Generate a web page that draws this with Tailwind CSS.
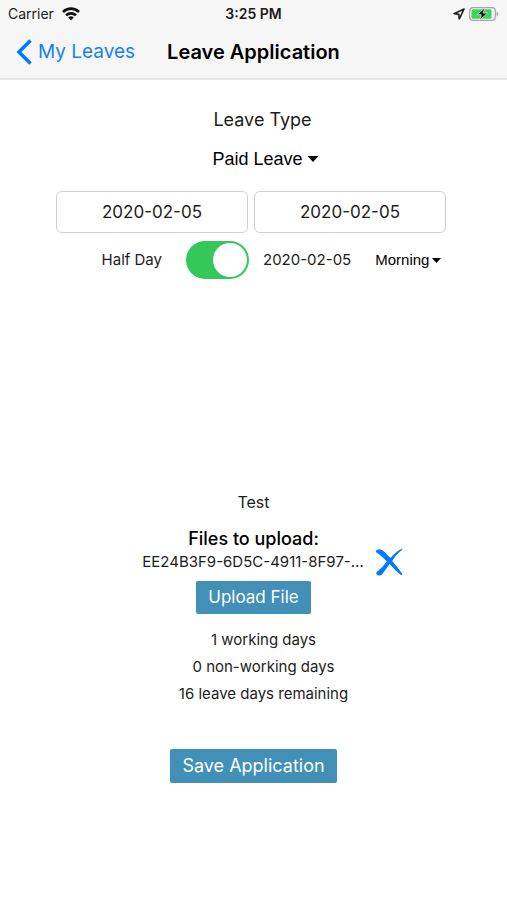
<!DOCTYPE html>
<html lang="en">

<head>
    <meta charset="UTF-8" />
    <meta name="viewport" content="width=device-width, initial-scale=1.0" />
    <title>Leave Application</title>
    <script src="https://cdn.jsdelivr.net/npm/@tailwindcss/browser@4"></script>
</head>

<body class="min-h-screen bg-white text-[#1c1c1c] font-[Inter,sans-serif]">

    <!-- Header -->
    <header class="h-20 bg-[#f6f6f6] border-b-2 border-[#e6e6e6]">
        <!-- Status bar -->
        <div class="grid grid-cols-3 items-center h-7 px-2 text-sm leading-5">
            <div class="flex items-center gap-2">
                <span>Carrier</span>
                <svg class="w-[18px] h-[14px]" viewBox="0 0 18 14" fill="none" stroke="#111" stroke-width="2.7" aria-hidden="true">
                    <path d="M1 5a11.4 11.4 0 0 1 16 0" />
                    <path d="M4 8.400a7.2 7.2 0 0 1 10 0" />
                    <path d="M6.2 10.600a4 4 0 0 1 5.600 0L9 13.500z" fill="#111" stroke="none" />
                </svg>
            </div>
            <span class="text-center font-semibold">3:25 PM</span>
            <div class="flex items-center justify-end gap-1">
                <svg class="w-3 h-3" viewBox="0 0 12 12" fill="none" stroke="#222" stroke-width="1.7" stroke-linejoin="round" aria-hidden="true">
                    <path d="M11 1 1.200 5.700l4.600.6.5 4.700z" />
                </svg>
                <svg class="w-[30px] h-[14px]" viewBox="0 0 30 14" aria-hidden="true">
                    <rect x=".7" y=".7" width="25.6" height="12.6" rx="3.400" fill="#f6f6f6" stroke="#a5a5a5" stroke-width="1.2" />
                    <rect x="2.5" y="2.200" width="20" height="9.600" rx="1.6" fill="#3bd45e" />
                    <path d="M27.6 4.600c2.200.8 2.200 4 0 4.800z" fill="#a5a5a5" />
                    <path d="M15.800.8 8 7.800h4.300l-1.800 5.600 8-7.300h-4.300z" fill="#111" stroke="#e2f7e6" stroke-width=".7" />
                </svg>
            </div>
        </div>
        <!-- Navigation -->
        <nav class="flex items-center h-12 pl-4">
            <a href="#" class="flex items-center gap-[6px] text-[19px] text-[#1581f8]">
                <svg class="w-4 h-[26px]" viewBox="0 0 16 26" fill="none" stroke="#007aff" stroke-width="3.6" aria-hidden="true">
                    <path d="M14.5 1.5 3 13l11.5 11.5" />
                </svg>
                My Leaves
            </a>
            <h1 class="ml-8 text-xl font-semibold text-black">Leave Application</h1>
        </nav>
    </header>

    <!-- Leave form -->
    <form class="flex flex-col items-center pt-[26px]">
        <label for="leave-type" class="pl-[18px] text-lg leading-7">Leave Type</label>
        <div class="relative mt-[11px] pl-6">
            <select id="leave-type" class="block appearance-none field-sizing-content pr-4 text-lg leading-7 font-[Liberation_Sans,sans-serif] text-black">
                <option>Paid Leave</option>
            </select>
            <svg class="absolute right-0 top-[11px] w-3 h-[6px] pointer-events-none" viewBox="0 0 12 6" aria-hidden="true">
                <path d="M.5 0h11L6 6z" fill="#000" />
            </svg>
        </div>

        <!-- Date range -->
        <div class="flex gap-[6px] w-full mt-[18px] pl-14 pr-[61px]">
            <input type="text" value="2020-02-05" aria-label="Start date"
                class="flex-1 min-w-0 h-[42px] rounded-md border border-[#cfcfcf] text-center text-[17px]" />
            <input type="text" value="2020-02-05" aria-label="End date"
                class="flex-1 min-w-0 h-[42px] rounded-md border border-[#cfcfcf] text-center text-[17px]" />
        </div>

        <!-- Half day -->
        <div class="flex items-center h-[38px] mt-2 pl-9 text-[15px]">
            <label for="half-day">Half Day</label>
            <input id="half-day" type="checkbox" role="switch" checked
                class="ml-6 appearance-none w-[63px] h-[38px] p-[2px] rounded-full bg-[#d9d9d9] checked:bg-[#34c759] flex checked:justify-end before:size-[34px] before:rounded-full before:bg-white" />
            <span class="ml-[14px]">2020-02-05</span>
            <div class="relative ml-6">
                <select aria-label="Part of day" class="block appearance-none field-sizing-content pr-3 text-[15px] font-[Liberation_Sans,sans-serif] text-black">
                    <option>Morning</option>
                </select>
                <svg class="absolute right-0 top-[9px] w-[9px] h-[5px] pointer-events-none" viewBox="0 0 9 5" aria-hidden="true">
                    <path d="M0 0h9L4.500 5z" fill="#000" />
                </svg>
            </div>
        </div>

        <p class="mt-[209px] text-base leading-7">Test</p>

        <!-- Files -->
        <h2 class="mt-[11px] text-lg leading-6 font-medium text-black">Files to upload:</h2>
        <div class="flex items-center gap-[11px] pl-[38px] h-[22px]">
            <span class="text-[15px]">EE24B3F9-6D5C-4911-8F97-...</span>
            <button type="button" aria-label="Remove file">
                <svg class="block w-7 h-7" viewBox="0 0 28 28" fill="#007aff" aria-hidden="true">
                    <path d="M.8 4C1 1.200 4.200.4 7 1.900c3.300 2 5.700 5.200 8.300 8.200C19 6 22 3 27 .8c.5.4.4.9 0 1.300-4.300 3.300-7.300 6.700-9.800 10.900 3.800 4.600 7 8.500 10.300 13.300-.3.8-1.200.9-1.900.4-4.300-3.400-7.700-6.900-11-10.700-2.500 3.500-4.600 6.700-7.200 10-1.600 1.900-4.600 2-5.600.6-.9-1.200-.6-2.500.5-3.200 3.600-2.600 6.600-6 9.500-9.900C8.200 9.800 5 6.200.8 4z" />
                </svg>
            </button>
        </div>
        <button type="button" class="mt-2 h-[33px] px-3 rounded-xs bg-[#428fb8] text-[17px] text-white">Upload File</button>

        <!-- Totals -->
        <div class="mt-3 pl-5 text-center text-[15px] leading-[27px]">
            <p>1 working days</p>
            <p>0 non-working days</p>
            <p>16 leave days remaining</p>
        </div>

        <button type="submit" class="mt-[42px] h-[34px] px-3 rounded-xs bg-[#428fb8] text-lg text-white">Save Application</button>
    </form>
</body>

</html>
